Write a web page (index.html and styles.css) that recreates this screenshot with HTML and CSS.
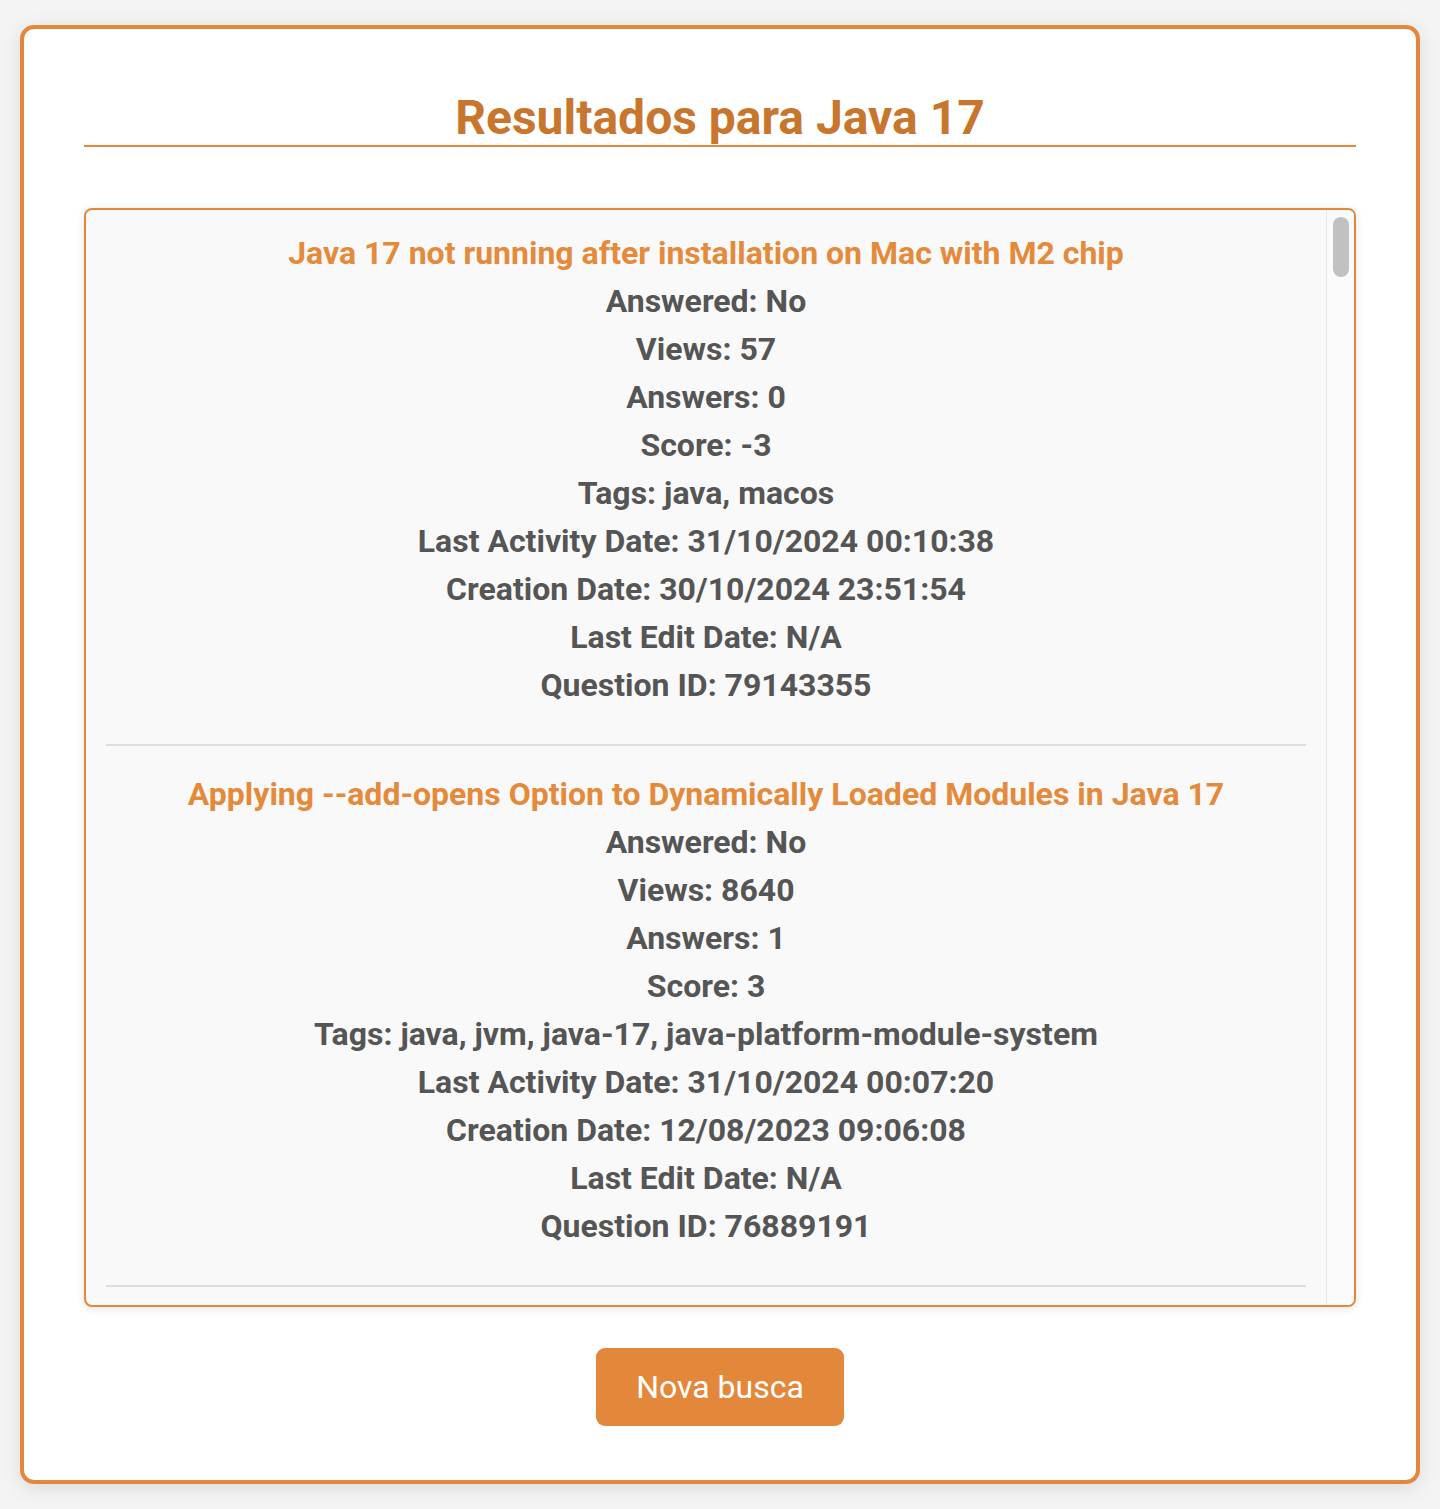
FILE: index.html
```html
<!DOCTYPE html>
<html lang="pt-BR">
<head>
<meta charset="utf-8">
<title>Resultados para Java 17</title>
<link rel="stylesheet" href="styles.css">
</head>
<body>
<main class="card">
  <h1 class="page-title">Resultados para Java 17</h1>
  <section class="results">
    <div class="results-list">
    <div class="item">
      <h3 class="item-title">Java 17 not running after installation on Mac with M2 chip</h3>
      <p>Answered: No</p><p>Views: 57</p><p>Answers: 0</p><p>Score: -3</p><p>Tags: java, macos</p>
      <p>Last Activity Date: 31/10/2024 00:10:38</p><p>Creation Date: 30/10/2024 23:51:54</p><p>Last Edit Date: N/A</p><p>Question ID: 79143355</p>
    </div>
    <div class="item">
      <h3 class="item-title">Applying --add-opens Option to Dynamically Loaded Modules in Java 17</h3>
      <p>Answered: No</p><p>Views: 8640</p><p>Answers: 1</p><p>Score: 3</p><p>Tags: java, jvm, java-17, java-platform-module-system</p>
      <p>Last Activity Date: 31/10/2024 00:07:20</p><p>Creation Date: 12/08/2023 09:06:08</p><p>Last Edit Date: N/A</p><p>Question ID: 76889191</p>
    </div>
    <div class="item">
      <h3 class="item-title">Spring Boot 3 fails to start with Java 17: UnsupportedClassVersionError</h3>
      <p>Answered: Yes</p><p>Views: 1520</p><p>Answers: 2</p><p>Score: 4</p><p>Tags: java, spring-boot, java-17</p>
      <p>Last Activity Date: 30/10/2024 23:58:12</p><p>Creation Date: 14/03/2023 16:22:41</p><p>Last Edit Date: 02/04/2023 10:15:03</p><p>Question ID: 75734289</p>
    </div>
    <div class="item">
      <h3 class="item-title">Gradle build fails after upgrading project from Java 11 to Java 17</h3>
      <p>Answered: Yes</p><p>Views: 3411</p><p>Answers: 3</p><p>Score: 7</p><p>Tags: java, gradle, java-17</p>
      <p>Last Activity Date: 30/10/2024 23:41:07</p><p>Creation Date: 21/01/2022 11:04:55</p><p>Last Edit Date: 25/01/2022 08:30:19</p><p>Question ID: 70800112</p>
    </div>
    <div class="item">
      <h3 class="item-title">Lombok not working with Java 17 in IntelliJ IDEA</h3>
      <p>Answered: Yes</p><p>Views: 25873</p><p>Answers: 5</p><p>Score: 42</p><p>Tags: java, intellij-idea, lombok, java-17</p>
      <p>Last Activity Date: 30/10/2024 23:12:40</p><p>Creation Date: 28/09/2021 14:45:02</p><p>Last Edit Date: 12/10/2021 09:11:37</p><p>Question ID: 69366418</p>
    </div>
    <div class="item">
      <h3 class="item-title">How to switch between Java 8 and Java 17 on Windows?</h3>
      <p>Answered: Yes</p><p>Views: 4102</p><p>Answers: 4</p><p>Score: 6</p><p>Tags: java, windows, environment-variables</p>
      <p>Last Activity Date: 30/10/2024 22:55:18</p><p>Creation Date: 05/06/2022 19:33:26</p><p>Last Edit Date: N/A</p><p>Question ID: 72508744</p>
    </div>
    <div class="item">
      <h3 class="item-title">Maven compiler plugin error: release version 17 not supported</h3>
      <p>Answered: Yes</p><p>Views: 98234</p><p>Answers: 12</p><p>Score: 118</p><p>Tags: java, maven, maven-compiler-plugin</p>
      <p>Last Activity Date: 30/10/2024 22:30:09</p><p>Creation Date: 20/10/2021 07:58:44</p><p>Last Edit Date: 18/05/2023 13:02:51</p><p>Question ID: 69640123</p>
    </div>
    <div class="item">
      <h3 class="item-title">Sealed classes and pattern matching for switch in Java 17</h3>
      <p>Answered: No</p><p>Views: 312</p><p>Answers: 1</p><p>Score: 2</p><p>Tags: java, switch-statement, sealed-class</p>
      <p>Last Activity Date: 30/10/2024 21:47:33</p><p>Creation Date: 27/10/2024 18:20:05</p><p>Last Edit Date: N/A</p><p>Question ID: 79130077</p>
    </div>
    <div class="item">
      <h3 class="item-title">InaccessibleObjectException when using reflection in Java 17</h3>
      <p>Answered: Yes</p><p>Views: 15320</p><p>Answers: 3</p><p>Score: 21</p><p>Tags: java, reflection, java-17</p>
      <p>Last Activity Date: 30/10/2024 21:05:51</p><p>Creation Date: 11/11/2021 10:41:29</p><p>Last Edit Date: 14/11/2021 16:27:08</p><p>Question ID: 69930845</p>
    </div>
    <div class="item">
      <h3 class="item-title">Records in Java 17 with Jackson deserialization</h3>
      <p>Answered: Yes</p><p>Views: 6743</p><p>Answers: 2</p><p>Score: 14</p><p>Tags: java, jackson, record</p>
      <p>Last Activity Date: 30/10/2024 20:40:12</p><p>Creation Date: 03/02/2022 12:18:40</p><p>Last Edit Date: N/A</p><p>Question ID: 70973012</p>
    </div>
    <div class="item">
      <h3 class="item-title">Docker image for Java 17 application is too large</h3>
      <p>Answered: No</p><p>Views: 891</p><p>Answers: 1</p><p>Score: 0</p><p>Tags: java, docker, java-17</p>
      <p>Last Activity Date: 30/10/2024 19:58:27</p><p>Creation Date: 17/07/2024 08:44:16</p><p>Last Edit Date: N/A</p><p>Question ID: 78759034</p>
    </div>
    <div class="item">
      <h3 class="item-title">JavaFX application not launching with Java 17 module path</h3>
      <p>Answered: No</p><p>Views: 2210</p><p>Answers: 2</p><p>Score: 1</p><p>Tags: java, javafx, java-17</p>
      <p>Last Activity Date: 30/10/2024 19:21:03</p><p>Creation Date: 09/05/2023 21:02:58</p><p>Last Edit Date: N/A</p><p>Question ID: 76206345</p>
    </div>
    <div class="item">
      <h3 class="item-title">Performance difference between Java 11 and Java 17 garbage collectors</h3>
      <p>Answered: Yes</p><p>Views: 3560</p><p>Answers: 2</p><p>Score: 9</p><p>Tags: java, garbage-collection, jvm</p>
      <p>Last Activity Date: 30/10/2024 18:47:45</p><p>Creation Date: 22/08/2022 15:36:11</p><p>Last Edit Date: 23/08/2022 09:04:50</p><p>Question ID: 73449871</p>
    </div>
    <div class="item">
      <h3 class="item-title">Text blocks in Java 17 ignoring trailing whitespace</h3>
      <p>Answered: Yes</p><p>Views: 745</p><p>Answers: 1</p><p>Score: 3</p><p>Tags: java, string, text-block</p>
      <p>Last Activity Date: 30/10/2024 18:02:19</p><p>Creation Date: 30/11/2023 10:25:37</p><p>Last Edit Date: N/A</p><p>Question ID: 77575120</p>
    </div>
    <div class="item">
      <h3 class="item-title">Tomcat 9 deployment fails on Java 17 with illegal reflective access</h3>
      <p>Answered: No</p><p>Views: 1998</p><p>Answers: 1</p><p>Score: 2</p><p>Tags: java, tomcat, java-17</p>
      <p>Last Activity Date: 30/10/2024 17:36:50</p><p>Creation Date: 14/04/2022 13:50:22</p><p>Last Edit Date: N/A</p><p>Question ID: 71874092</p>
    </div>
    <div class="item">
      <h3 class="item-title">Eclipse does not recognize Java 17 JDK installation</h3>
      <p>Answered: Yes</p><p>Views: 11204</p><p>Answers: 6</p><p>Score: 15</p><p>Tags: java, eclipse, java-17</p>
      <p>Last Activity Date: 30/10/2024 16:59:08</p><p>Creation Date: 16/09/2021 17:12:44</p><p>Last Edit Date: 20/09/2021 11:48:31</p><p>Question ID: 69210533</p>
    </div>
    <div class="item">
      <h3 class="item-title">Strong encapsulation of JDK internals breaks library in Java 17</h3>
      <p>Answered: Yes</p><p>Views: 5122</p><p>Answers: 2</p><p>Score: 11</p><p>Tags: java, jvm, java-platform-module-system</p>
      <p>Last Activity Date: 30/10/2024 16:14:36</p><p>Creation Date: 08/12/2021 09:27:15</p><p>Last Edit Date: N/A</p><p>Question ID: 70273981</p>
    </div>
    <div class="item">
      <h3 class="item-title">How to use the new RandomGenerator API in Java 17?</h3>
      <p>Answered: Yes</p><p>Views: 1409</p><p>Answers: 1</p><p>Score: 5</p><p>Tags: java, random, java-17</p>
      <p>Last Activity Date: 30/10/2024 15:40:21</p><p>Creation Date: 26/02/2022 20:03:09</p><p>Last Edit Date: N/A</p><p>Question ID: 71279402</p>
    </div>
    <div class="item">
      <h3 class="item-title">SecurityManager deprecated in Java 17: what are the alternatives?</h3>
      <p>Answered: Yes</p><p>Views: 4388</p><p>Answers: 3</p><p>Score: 19</p><p>Tags: java, security, java-17</p>
      <p>Last Activity Date: 30/10/2024 15:02:57</p><p>Creation Date: 19/10/2021 14:55:30</p><p>Last Edit Date: 21/10/2021 08:19:46</p><p>Question ID: 69633617</p>
    </div>
    <div class="item">
      <h3 class="item-title">Android Gradle Plugin requires Java 17 to run</h3>
      <p>Answered: Yes</p><p>Views: 187650</p><p>Answers: 21</p><p>Score: 290</p><p>Tags: java, android, gradle, android-studio</p>
      <p>Last Activity Date: 30/10/2024 14:31:44</p><p>Creation Date: 20/04/2023 06:42:18</p><p>Last Edit Date: 11/07/2023 19:30:02</p><p>Question ID: 76064938</p>
    </div>
    <div class="item">
      <h3 class="item-title">Pattern matching instanceof not compiling with Java 17</h3>
      <p>Answered: Yes</p><p>Views: 956</p><p>Answers: 1</p><p>Score: 1</p><p>Tags: java, pattern-matching, instanceof</p>
      <p>Last Activity Date: 30/10/2024 13:48:10</p><p>Creation Date: 02/10/2023 11:07:53</p><p>Last Edit Date: N/A</p><p>Question ID: 77214602</p>
    </div>
    <div class="item">
      <h3 class="item-title">Kotlin and Java 17 interoperability issue with sealed interfaces</h3>
      <p>Answered: No</p><p>Views: 433</p><p>Answers: 0</p><p>Score: 2</p><p>Tags: java, kotlin, sealed-class</p>
      <p>Last Activity Date: 30/10/2024 12:55:38</p><p>Creation Date: 29/10/2024 22:14:06</p><p>Last Edit Date: N/A</p><p>Question ID: 79137811</p>
    </div>
    <div class="item">
      <h3 class="item-title">JAXB removed in Java 17: how to migrate XML binding code</h3>
      <p>Answered: Yes</p><p>Views: 7312</p><p>Answers: 3</p><p>Score: 12</p><p>Tags: java, xml, jaxb, java-17</p>
      <p>Last Activity Date: 30/10/2024 12:10:24</p><p>Creation Date: 07/03/2022 16:40:59</p><p>Last Edit Date: N/A</p><p>Question ID: 71381250</p>
    </div>
    <div class="item">
      <h3 class="item-title">NoSuchFieldError with Lombok and JDK 17 during compilation</h3>
      <p>Answered: Yes</p><p>Views: 9023</p><p>Answers: 4</p><p>Score: 17</p><p>Tags: java, lombok, java-17</p>
      <p>Last Activity Date: 30/10/2024 11:26:13</p><p>Creation Date: 13/10/2021 08:05:47</p><p>Last Edit Date: 15/10/2021 10:22:36</p><p>Question ID: 69548466</p>
    </div>
    <div class="item">
      <h3 class="item-title">Configuring JAVA_HOME for Java 17 on Ubuntu 22.04</h3>
      <p>Answered: Yes</p><p>Views: 12877</p><p>Answers: 5</p><p>Score: 24</p><p>Tags: java, ubuntu, java-home</p>
      <p>Last Activity Date: 30/10/2024 10:43:02</p><p>Creation Date: 18/05/2022 07:31:28</p><p>Last Edit Date: N/A</p><p>Question ID: 72285520</p>
    </div>
    <div class="item">
      <h3 class="item-title">Nashorn JavaScript engine missing in Java 17</h3>
      <p>Answered: Yes</p><p>Views: 6120</p><p>Answers: 2</p><p>Score: 13</p><p>Tags: java, javascript, nashorn</p>
      <p>Last Activity Date: 30/10/2024 09:59:49</p><p>Creation Date: 24/11/2021 13:16:20</p><p>Last Edit Date: N/A</p><p>Question ID: 70101474</p>
    </div>
    <div class="item">
      <h3 class="item-title">Unable to make field accessible: module java.base does not open java.lang</h3>
      <p>Answered: Yes</p><p>Views: 54310</p><p>Answers: 8</p><p>Score: 73</p><p>Tags: java, java-17, java-platform-module-system</p>
      <p>Last Activity Date: 30/10/2024 09:14:31</p><p>Creation Date: 30/09/2021 18:49:12</p><p>Last Edit Date: 04/10/2021 12:37:55</p><p>Question ID: 69387009</p>
    </div>
    <div class="item">
      <h3 class="item-title">Virtual threads not available in Java 17: preview features question</h3>
      <p>Answered: No</p><p>Views: 1021</p><p>Answers: 1</p><p>Score: -1</p><p>Tags: java, multithreading, java-17</p>
      <p>Last Activity Date: 30/10/2024 08:30:06</p><p>Creation Date: 11/01/2024 15:58:43</p><p>Last Edit Date: N/A</p><p>Question ID: 77800652</p>
    </div>
    <div class="item">
      <h3 class="item-title">Java 17 HttpClient timeout not respected for slow responses</h3>
      <p>Answered: No</p><p>Views: 689</p><p>Answers: 1</p><p>Score: 0</p><p>Tags: java, httpclient, java-17</p>
      <p>Last Activity Date: 30/10/2024 07:47:52</p><p>Creation Date: 21/06/2024 09:12:34</p><p>Last Edit Date: N/A</p><p>Question ID: 78650021</p>
    </div>
    <div class="item">
      <h3 class="item-title">Migrating from Java 8 to Java 17: deprecated APIs checklist</h3>
      <p>Answered: Yes</p><p>Views: 2874</p><p>Answers: 2</p><p>Score: 6</p><p>Tags: java, migration, java-17</p>
      <p>Last Activity Date: 30/10/2024 07:03:15</p><p>Creation Date: 04/04/2023 14:27:08</p><p>Last Edit Date: N/A</p><p>Question ID: 75930877</p>
    </div>
    </div>
    <div class="scrollbar" aria-hidden="true">
      <div class="scrollbar-thumb"></div>
    </div>
  </section>
  <div class="actions">
    <button class="btn" type="button">Nova busca</button>
  </div>
</main>
</body>
</html>
```
FILE: styles.css
```css
* { box-sizing: border-box; }

html, body {
  margin: 0;
  padding: 0;
}

body {
  background: #f4f4f4;
  font-family: Roboto, "Noto Sans", "Liberation Sans", sans-serif;
  color: #555;
  padding: 25px 20px 24px;
}

.card {
  background: #fff;
  border: 4px solid #e3883b;
  border-radius: 14px;
  box-shadow: 0 4px 20px rgba(0, 0, 0, 0.1);
  padding: 62px 60px 54px;
}

.page-title {
  margin: 0 0 61px;
  font-size: 48px;
  line-height: 54px;
  font-weight: 700;
  color: #c8762e;
  text-align: center;
  border-bottom: 2px solid #e3883b;
}

.results {
  display: flex;
  height: 1099px;
  overflow: hidden;
  background: #f9f9f9;
  border: 2px solid #e3883b;
  border-radius: 8px;
  box-shadow: 0 2px 10px rgba(0, 0, 0, 0.1);
}

.results-list {
  flex: 1;
  min-width: 0;
  overflow: hidden;
  padding: 0 20px;
}

.scrollbar {
  flex: 0 0 28px;
  background: #fafafa;
  border-left: 1px solid #e6e6e6;
  padding: 7px 5px 0 6px;
}

.scrollbar-thumb {
  height: 60px;
  background: #c1c1c1;
  border-radius: 8px;
}

.item {
  padding: 24px 0 35px;
  border-bottom: 2px solid #dddddd;
  text-align: center;
}

.item:first-child {
  padding-top: 19px;
}

.item-title {
  margin: 0;
  font-size: 32px;
  line-height: 48px;
  font-weight: 700;
  color: #e5893b;
}

.item p {
  margin: 0;
  font-size: 32px;
  line-height: 48px;
  font-weight: 700;
  color: #555;
}

.actions {
  display: flex;
  justify-content: center;
  margin-top: 41px;
}

.btn {
  font-family: Roboto, "Noto Sans", "Liberation Sans", sans-serif;
  font-size: 32px;
  line-height: 38px;
  font-weight: 400;
  color: #fff;
  background: #e3883b;
  border: none;
  border-radius: 9px;
  padding: 20px 40px;
  cursor: pointer;
}
```
